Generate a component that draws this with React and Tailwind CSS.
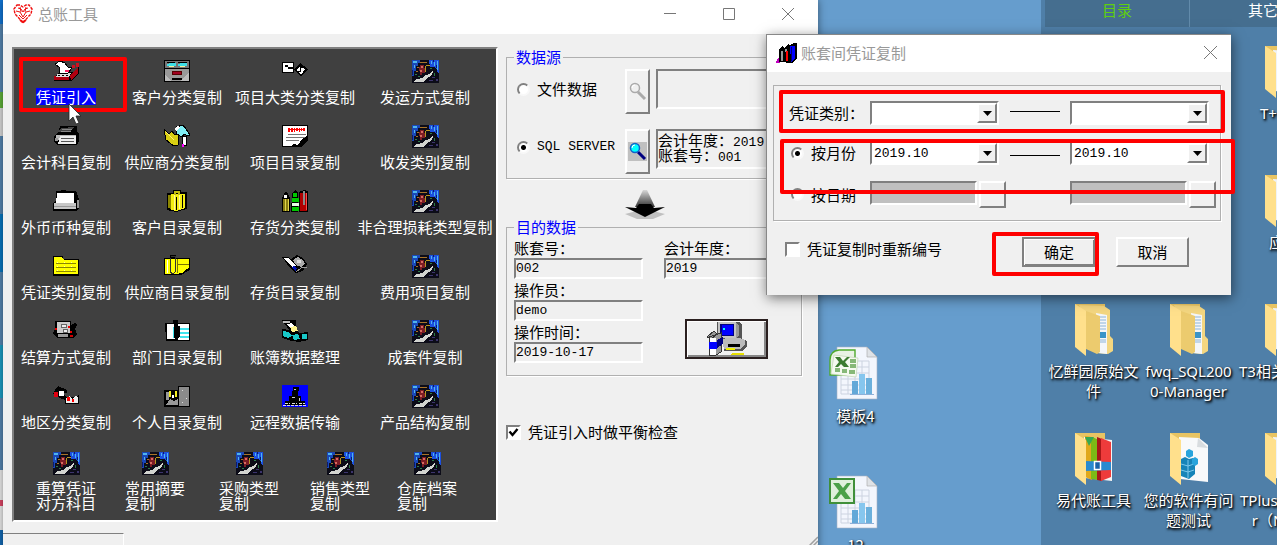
import { useState } from "react";

const cjk = "font-['Noto_Sans_CJK_SC',sans-serif]";
const mono = "font-['Liberation_Mono','Noto_Sans_CJK_SC',monospace] text-[13px]";
const sunken =
  "border-2 border-t-[#808080] border-l-[#808080] border-r-white border-b-white";
const raised =
  "border-2 border-t-white border-l-white border-r-[#808080] border-b-[#808080]";

// 26x22 toolbox icons
const icons = {
  register: (
    <>
      <path d="M1 17l5-5h18l2-8v9l-7 8H1z" fill="#000" />
      <path d="M1 16h15v4H1zM17 15l8-7v5l-7 7z" fill="#b00010" />
      <path d="M5 13h13l-2 4H3z" fill="#ddd" />
      <path d="M2 4l5-3 5 2 3 4 4 1-4 5H6l1-5z" fill="#fff" stroke="#000" />
      <path d="M19 5h3v3h-3zM23 3h3v4h-3z" fill="#d01020" />
      <path d="M12 10h4v2h-4z" fill="#ff2060" />
      <path d="M5 15h2M9 15h2M13 15h2" stroke="#000" />
    </>
  ),
  cabinet: (
    <>
      <path d="M0 0h26v22H0z" fill="#000" />
      <path d="M1 1h24v7H1z" fill="#777" />
      <path d="M3 4l4-1h5v3H3zM14 4l4-1h5v3h-9z" fill="#3fe0e8" />
      <path d="M5 6h5v1H5zM16 6h5v1h-5z" fill="#f4f09a" />
      <path d="M3 2h8M14 2h9" stroke="#000" />
      <path d="M1 9h24v12H1z" fill="#999" />
      <path d="M1 15l6 6H1zM25 12v9h-8z" fill="#bbb" />
      <path d="M8 11h10v4H8z" fill="#500" />
      <path d="M9 12h8v2H9z" fill="#a00020" />
      <path d="M8 18h10v2H8z" fill="#000" />
    </>
  ),
  notes: (
    <>
      <path d="M0 2h12v11H0z" fill="#000" />
      <path d="M1 3h10v9H1z" fill="#fff" />
      <path d="M3 5h3v2H3zM6 7h6v2H6z" fill="#000" />
      <path d="M12 10l6-7 8 6-7 8z" fill="#000" />
      <path d="M15 10l3-4 5 3-4 6z" fill="#fff" />
      <path d="M18 6v5h-2M19 7h3v2" fill="none" stroke="#000" />
    </>
  ),
  photo: (
    <>
      <path d="M0 0h27v23H0z" fill="#0c0c18" />
      <path d="M0 0h8v3H6v3H4v5H2v5H0z" fill="#1a48b8" />
      <path d="M17 0h10v14l-2-2V9l-3-2h-4z" fill="#1c50e0" />
      <path d="M1 1h4v2H1zM2 5h1v3H2zM19 1h1v3h-1zM22 2h1v4h-1zM25 1h1v9h-1z" fill="#4fb4ee" />
      <path d="M0 10h1v5H0zM21 0h1v2h-1zM24 5h1v3h-1z" fill="#0a1a70" />
      <path d="M8 2h7v1H8zM5 7h2v1H5zM4 11h2v1H4z" fill="#a8742a" />
      <path d="M8 5h4v3h1v5h-3v2H8v-4H7V7h1z" fill="#7c1c24" />
      <path d="M9 6h2v2H9zM8 10h2v2H8z" fill="#d86a60" />
      <path d="M13 6h1v6h-1zM14 5h4v1h-4z" fill="#b89422" />
      <path d="M3 14h2v1H3zM6 16h2v1H6zM18 8h2v1h-2zM22 13h1v3h-1z" fill="#2c7c4a" />
      <path d="M1 22l4-3 5-1 4-3 3-1 3-3 1 1-2 4-5 3-3 3z" fill="#d2d4d0" />
      <path d="M20 17h3v1h-3zM17 20h4v1h-4zM24 19h2v2h-2z" fill="#3c346c" />
    </>
  ),
  typewriter: (
    <>
      <path d="M7 1h17v5l2 3v7l-2 4H4l-3-3v-6l4-3z" fill="#000" />
      <path d="M8 3l13-1-4 5H4z" fill="#444" />
      <path d="M9 4h10M8 6h10" stroke="#888" />
      <path d="M3 10h20v5H3z" fill="#bbb" />
      <path d="M7 11h16v8H5z" fill="#eee" />
      <path d="M8 13h13M8 16h13" stroke="#555" />
      <path d="M2 13h3v3H2z" fill="#999" />
    </>
  ),
  supplier: (
    <>
      <path d="M0 4l5 5 3-3 3 4 3-2v12l-4 1-8-6z" fill="#d9cf13" stroke="#000" />
      <path d="M2 7l8 8" stroke="#fff07a" />
      <path d="M12 2l7-2 3 4 4 6-3 1-2-2-4 3-5-4z" fill="#7feef5" stroke="#000" />
      <path d="M10 4l3-3 3 1-3 4z" fill="#fff" />
      <path d="M18 11h4v9h-3z" fill="#fff" stroke="#000" />
      <path d="M18 19h2v3h-2z" fill="#f0f" />
    </>
  ),
  paper: (
    <>
      <path d="M0 0h26v16l-7 6H0z" fill="#000" />
      <path d="M1 1h24v10l-5 3-4 6-4-1-3 2H1z" fill="#fff" />
      <path d="M6 3h2v4H6zM9 3h2v4H9zM12 3h1v4h-1zM14 3h2v3h-2zM17 3h1v4h-1zM19 3h1v3h-1zM21 3h2v3h-2zM6 4h17v1H6z" fill="#f00" />
      <path d="M6 9h18M4 12h19M4 15h13" stroke="#777" />
    </>
  ),
  printer: (
    <>
      <path d="M3 1h5V0h5v1h10l3 8v9l-2 3H0v-8l3-2z" fill="#000" />
      <path d="M4 3h17v10H3z" fill="#fff" />
      <path d="M1 13h22v6H1z" fill="#c8c8c8" />
      <path d="M24 10h1v7h-1zM1 16h22" fill="#888" stroke="#999" />
    </>
  ),
  bag: (
    <>
      <path d="M3 3h6V0h8v2h6v17l-11 3-9-2z" fill="#000" />
      <path d="M7 4h14v14l-9 3-5-1z" fill="#f4ee12" />
      <path d="M4 5h3v14l-3-1z" fill="#8c8600" />
      <path d="M10 5v15M15 4v15" stroke="#fff89a" />
      <path d="M10 1h6v4h-2V3h-2v2h-2z" fill="#c4bc10" />
      <path d="M12 7v13M18 5v13" stroke="#000" />
    </>
  ),
  shelf: (
    <>
      <path d="M0 8l3-6h2l3 6v14H0zM10 4l3-4 3 3v19H9zM17 2l5-2 4 1v21h-9z" fill="#000" />
      <path d="M1 9h6v12H1z" fill="#8a7f12" />
      <path d="M2 5h3v3H2z" fill="#fff" />
      <path d="M3 9v12M6 9v12" stroke="#e1d64c" />
      <path d="M11 3h4v4h-4zM10 8h7v4h-7zM10 17h7v4h-7z" fill="#00c800" />
      <path d="M10 13h7v3h-7z" fill="#e8ffe8" />
      <path d="M18 3h7v18h-7z" fill="#b00000" />
      <path d="M21 1h2v14h-2z" fill="#888" />
      <path d="M24 3v17" stroke="#ff4848" />
    </>
  ),
  folder: (
    <>
      <path d="M0 1h10v3h16v17H0z" fill="#000" />
      <path d="M1 2h8l2 3h14v14H1z" fill="#ff0" />
      <path d="M3 8h20M3 12h20M3 16h20" stroke="#8a8500" />
      <path d="M4 7v11M11 7v11M18 7v11" stroke="#ffffa0" strokeDasharray="1 3" />
    </>
  ),
  folderClip: (
    <>
      <path d="M0 3h6V0h6v3h14v12l-9 5H0z" fill="#000" />
      <path d="M1 4h24v9l-4 2-2 3-8 1H1z" fill="#ff0" />
      <path d="M7 1h4v16l-2 2-3-2V3" fill="none" stroke="#333" />
      <path d="M13 4v14M14 9h11" stroke="#7a7500" />
      <path d="M3 5v13" stroke="#fff" />
    </>
  ),
  handset: (
    <>
      <path d="M0 2h6l3 2 6-4 6 3 4 6-4 7-7 2-6-5z" fill="#000" />
      <path d="M2 3h4l8 7-3 3z" fill="#fff" />
      <path d="M11 5l5-3 5 3 2 4-4 3-5-2z" fill="#aaa" />
      <path d="M15 5h4v3h-4z" fill="#ddd" />
      <path d="M9 12l5 4 1-3-3-2z" fill="#0010b0" />
      <path d="M14 17l5-4 6-1" fill="none" stroke="#999" />
    </>
  ),
  safe: (
    <>
      <path d="M2 1h16v4l4-2 2 2-2 4 2 5-4 4H4l-4-5 2-4z" fill="#000" />
      <path d="M4 2h13v11H4z" fill="#ccc" />
      <path d="M8 4h5v3H8zM10 9h4v3h-4z" fill="#eee" stroke="#666" />
      <path d="M2 8h2v2H2zM15 6h2v2h-2zM17 11h2v2h-2z" fill="#e00" />
      <path d="M5 14h10v3H5z" fill="#999" />
      <path d="M17 15h3v2h-3z" fill="#c00" />
    </>
  ),
  books: (
    <>
      <path d="M1 3h8V0h5v3h12v18H2z" fill="#000" />
      <path d="M3 4h8v15H3zM14 4h11v16H14z" fill="#fff" />
      <path d="M9 7h2v11H9zM16 8h9v2h-9zM16 12h9v2h-9zM16 16h9v2h-9z" fill="#40e4ee" />
      <path d="M11 2v15l2 1 2-2V6" fill="none" stroke="#000" strokeWidth="2" />
    </>
  ),
  lamp: (
    <>
      <path d="M0 0h14v10l3 3 9-1v8l-9 2-7-1-10-3v-9l7 1z" fill="#000" />
      <path d="M1 1h7v2H1z" fill="#bbb" />
      <path d="M5 4l5-1 2 3-4 2z" fill="#fff" />
      <path d="M8 7l6-1 2 5-6 1z" fill="#fff58c" />
      <path d="M1 11l6 1 3 4-4 2-5-2zM10 15l6-1 2 5-6 1zM20 14h5v5h-5z" fill="#18c8c8" />
    </>
  ),
  horn: (
    <>
      <path d="M5 1l9 4v3H9l5 4h9l3-2v9H12v-4L5 12l-5-3 2-4z" fill="#000" />
      <path d="M6 6h5v5H6z" fill="#fff" />
      <path d="M1 7h4v5H1z" fill="#e00010" />
      <path d="M13 13l4-2 2 3 4-3 2 2v5H13z" fill="#eee" />
      <path d="M14 12h3v4h-3zM19 14h2v3h-2z" fill="#f00" />
    </>
  ),
  person: (
    <>
      <path d="M0 5h14V1h12v21H0z" fill="#000" />
      <path d="M15 2h10v19H15z" fill="#8b8b8b" />
      <path d="M18 5h1v1h-1zM22 13h1v1h-1zM18 17h1v1h-1z" fill="#ddd" />
      <path d="M2 7h3v8H2zM6 14l4 2 4-2v6H2z" fill="#999" />
      <path d="M5 6h2v6H5zM11 6h2v6h-2z" fill="#f4ee20" />
      <path d="M8 10h2v3H8z" fill="#fff" />
    </>
  ),
  remote: (
    <>
      <path d="M0 0h26v22H0z" fill="#00f" />
      <path d="M11 2h6v4h-1v5h3v5h4v4H3v-4h4v-5h3z" fill="#000" />
      <path d="M12 4h2v1h-2zM10 12h3v1h-3zM17 13h1v3h-1z" fill="#ccc" />
      <path d="M1 20h24M3 18h5M10 18h5M17 18h6" stroke="#ddd" strokeDasharray="3 1" />
    </>
  ),
};

const tools = [
  ["凭证引入", "register"],
  ["客户分类复制", "cabinet"],
  ["项目大类分类复制", "notes"],
  ["发运方式复制", "photo"],
  ["会计科目复制", "typewriter"],
  ["供应商分类复制", "supplier"],
  ["项目目录复制", "paper"],
  ["收发类别复制", "photo"],
  ["外币币种复制", "printer"],
  ["客户目录复制", "bag"],
  ["存货分类复制", "shelf"],
  ["非合理损耗类型复制", "photo"],
  ["凭证类别复制", "folder"],
  ["供应商目录复制", "folderClip"],
  ["存货目录复制", "handset"],
  ["费用项目复制", "photo"],
  ["结算方式复制", "safe"],
  ["部门目录复制", "books"],
  ["账簿数据整理", "lamp"],
  ["成套件复制", "photo"],
  ["地区分类复制", "horn"],
  ["个人目录复制", "person"],
  ["远程数据传输", "remote"],
  ["产品结构复制", "photo"],
];

const bottomTools = [
  ["重算凭证", "对方科目"],
  ["常用摘要", "复制"],
  ["采购类型", "复制"],
  ["销售类型", "复制"],
  ["仓库档案", "复制"],
];

function ToolIcon({ name }) {
  return (
    <svg width="27" height="24" viewBox="0 0 27 24" shapeRendering="crispEdges" aria-hidden="true">
      {icons[name]}
    </svg>
  );
}

function Toolbox() {
  const [selected, setSelected] = useState("凭证引入");

  return (
    <div className="w-[486px] h-[475px] shrink-0 border-2 border-t-[#808080] border-l-[#808080] border-r-white border-b-white bg-[#404040] text-white">
      <div className="grid grid-cols-[104px_118px_118px_142px] pt-[11px]">
        {tools.map(([label, icon]) => (
          <button
            key={label}
            onClick={() => setSelected(label)}
            className="flex h-[65px] flex-col items-center gap-1 whitespace-nowrap"
          >
            <ToolIcon name={icon} />
            <span className={selected === label ? "bg-[#0000ff] leading-[17px]" : "leading-[17px]"}>
              {label}
            </span>
          </button>
        ))}
      </div>
      <div className="grid grid-cols-[89px_94px_91px_87px_60px] pt-0.5 pl-[22px]">
        {bottomTools.map(([first, second]) => (
          <button key={first} className="flex w-[60px] flex-col items-center gap-1 text-left">
            <ToolIcon name="photo" />
            <span className="w-full leading-[15px]">
              {first}
              <br />
              {second}
            </span>
          </button>
        ))}
      </div>
    </div>
  );
}

function Radio({ children, className = "", ...props }) {
  return (
    <label className={`flex items-center gap-[7px] whitespace-nowrap ${className}`}>
      <input
        type="radio"
        className="size-[13px] appearance-none rounded-full border-2 border-t-[#808080] border-l-[#808080] border-r-[#f8f8f8] border-b-[#f8f8f8] bg-white checked:bg-[radial-gradient(circle,#000_2px,#fff_3px)]"
        {...props}
      />
      {children}
    </label>
  );
}

function Checkbox({ children, defaultChecked }) {
  return (
    <label className="flex items-center gap-[7px] whitespace-nowrap">
      <span className="grid">
        <input
          type="checkbox"
          defaultChecked={defaultChecked}
          className={`peer col-start-1 row-start-1 size-[15px] appearance-none bg-white ${sunken}`}
        />
        <svg
          className="pointer-events-none invisible col-start-1 row-start-1 size-[15px] peer-checked:visible"
          viewBox="0 0 15 15"
          fill="none"
          stroke="#000"
          strokeWidth="2.4"
        >
          <path d="M3.5 6.5l3 3.5 5-6" />
        </svg>
      </span>
      {children}
    </label>
  );
}

function Combo({ label, value, className }) {
  return (
    <div className={`relative h-6 bg-white ${sunken} ${className}`}>
      <select
        aria-label={label}
        defaultValue={value}
        className={`block h-5 w-full appearance-none bg-transparent px-0.5 pt-0.5 leading-[18px] outline-none ${mono}`}
      >
        <option>{value}</option>
      </select>
      <span className={`pointer-events-none absolute inset-y-0 right-0 flex w-5 items-center justify-center bg-[#f0f0f0] ${raised}`}>
        <svg width="9" height="5" viewBox="0 0 9 5">
          <path d="M0 0h9L4.5 5z" />
        </svg>
      </span>
    </div>
  );
}

function Field({ id, label, value }) {
  return (
    <div className="w-[129px]">
      <label htmlFor={id} className="block h-[21px] leading-[21px]">
        {label}
      </label>
      <input
        id={id}
        readOnly
        value={value}
        className={`block h-[21px] w-full bg-transparent outline-none ${sunken} ${mono}`}
      />
    </div>
  );
}

function Magnifier({ lens, rim, handle }) {
  return (
    <svg width="19" height="19" viewBox="0 0 19 19" fill="none">
      <path d="M10 10l7 7" stroke={handle} strokeWidth="3" />
      <circle cx="7" cy="6" r="4.5" fill={lens} stroke={rim} strokeWidth="1.5" />
      <path d="M4 6a3 3 0 013-3" stroke="#fff" />
    </svg>
  );
}

function DataSource() {
  return (
    <fieldset className="h-[131px] border border-[#b0b0b0] shadow-[1px_1px_0_#fff]">
      <legend className="ml-[7px] px-0.5 leading-[18px] text-[#0000ff]">数据源</legend>
      <div className="flex flex-col gap-[15px] pt-[3px] pl-2.5">
        <div className="flex h-[45px]">
          <Radio name="source" className="h-10 w-[108px]">
            文件数据
          </Radio>
          <button aria-label="浏览文件" className={`mr-1.5 flex w-[25px] items-center justify-center bg-[#f0f0f0] ${raised}`}>
            <Magnifier lens="#f0f0f0" rim="#aaaaaa" handle="#aaaaaa" />
          </button>
          <div className={`h-10 w-[138px] ${sunken}`} />
        </div>
        <div className="flex h-[45px]">
          <Radio name="source" defaultChecked className="h-9 w-[108px]">
            <span className={mono}>SQL SERVER</span>
          </Radio>
          <button aria-label="浏览账套" className={`mr-1.5 flex w-[25px] items-center justify-center bg-[#f0f0f0] ${raised}`}>
            <span className="bg-[#c0c0c0]">
              <Magnifier lens="#00ffff" rim="#1460c8" handle="#000080" />
            </span>
          </button>
          <div className={`h-10 w-[138px] pt-px leading-[15px] whitespace-nowrap ${sunken}`}>
            <p className="h-[15px]">
              会计年度：<span className={mono}>2019</span>
            </p>
            <p className="h-[15px]">
              账套号：<span className={mono}>001</span>
            </p>
          </div>
        </div>
      </div>
    </fieldset>
  );
}

function TargetData() {
  return (
    <fieldset className="border border-[#b0b0b0] pb-3 shadow-[1px_1px_0_#fff]">
      <legend className="ml-[7px] px-0.5 leading-[18px] text-[#0000ff]">目的数据</legend>
      <div className="flex gap-[21px] pt-px pl-[7px]">
        <div>
          <Field id="account" label="账套号：" value="002" />
          <Field id="operator" label="操作员：" value="demo" />
          <Field id="time" label="操作时间：" value="2019-10-17" />
        </div>
        <div>
          <Field id="year" label="会计年度：" value="2019" />
          <button
            aria-label="执行"
            className="mt-10 ml-[21px] flex h-10 w-[83px] items-center justify-center border-2 border-[#2b2020] bg-[#f0f0f0] shadow-[inset_1px_1px_0_#fff,inset_-2px_-2px_0_#888]"
          >
            <svg width="42" height="34" viewBox="0 0 42 34" shapeRendering="crispEdges">
              <path d="M11 0h22l3 3v14l5 2v5l-5 5H18V17h-7z" fill="#555" />
              <path d="M12 0h18v16H12z" fill="#c4c4c4" />
              <path d="M30 1l3 2v11l-3 2z" fill="#999" />
              <path d="M14 2h14v12H14z" fill="#000080" />
              <path d="M16 3h11v10H16z" fill="#00f" />
              <path d="M17 6h2v2h-2z" fill="#0ff" />
              <path d="M16 18l4-2h13l6 2v4l-5 5H18z" fill="#bbb" />
              <path d="M22 22h12v3H22z" fill="#000" />
              <path d="M20 26h9v2h-9z" fill="#ee0" />
              <path d="M1 15l7-6 3 3-6 5zM3 15l12-4v19l-5 3H3z" fill="#999" stroke="#333" />
              <path d="M4 16h6v17H4z" fill="#fff" />
              <path d="M3 20h8v7H3z" fill="#00f" />
              <path d="M11 18l6-3v7l-6 4z" fill="#000080" />
              <path d="M26 31h12v2H24z" fill="#e8e000" />
            </svg>
          </button>
        </div>
      </div>
    </fieldset>
  );
}

function DownArrow() {
  return (
    <svg width="40" height="30" viewBox="0 0 40 30" className="mt-[11px] ml-[119px]">
      <defs>
        <linearGradient id="fade" x1="0" y1="0" x2="0" y2="1">
          <stop offset="0" stopColor="#d8d8d8" />
          <stop offset="1" stopColor="#333" />
        </linearGradient>
      </defs>
      <path d="M0 24l20-5 20 5-12 5H12z" fill="#c0c0c0" />
      <path d="M18 0h4l8 17H10z" fill="url(#fade)" />
      <path d="M0 17l11 1 3-4h12l3 4 11-1-20 10z" fill="#000" />
    </svg>
  );
}

function MainWindow() {
  return (
    <section className="absolute top-0 left-[3px] w-[815px] bg-[#f0f0f0] shadow-[0_0_8px_#0007]">
      <header className="flex h-[34px] items-center bg-white pb-1.5">
        <svg width="20" height="20" viewBox="0 0 20 20" fill="none" stroke="#f01010" className="ml-2.5">
          <path d="M4 1h3l3 2 3-2h3l3 4-1 5-3 3-5 6-5-6-3-3-1-5z" strokeDasharray="3 1" strokeWidth="1.4" />
          <path d="M5 4l3 1 2 3 2-3 3-1M3 7l4 1 3 5 3-5 4-1M6 11l4 4 4-4M7 3l1 5M13 3l-1 5" />
          <path d="M7 16l3 2 3-2" strokeWidth="2" />
        </svg>
        <h1 className="ml-[5px] flex-1 text-[#999]">总账工具</h1>
        <div className="flex items-center gap-[47px] pr-6">
          <button aria-label="最小化">
            <svg width="12" height="12" stroke="#777"><path d="M0 5.5h12" /></svg>
          </button>
          <button aria-label="最大化">
            <svg width="12" height="12" fill="none" stroke="#777"><path d="M.5.5h11v11H.5z" /></svg>
          </button>
          <button aria-label="关闭">
            <svg width="12" height="12" stroke="#777"><path d="M0 0l12 12M12 0L0 12" /></svg>
          </button>
        </div>
      </header>
      <div className="flex gap-2 pt-[13px] pr-4 pl-[9px]">
        <Toolbox />
        <div className="flex-1 pt-px">
          <DataSource />
          <DownArrow />
          <div className="-mt-0.5">
            <TargetData />
          </div>
          <div className="mt-[46px]">
            <Checkbox defaultChecked>凭证引入时做平衡检查</Checkbox>
          </div>
        </div>
      </div>
      <footer className="mt-[11px] flex items-start justify-between">
        <div className="h-5 w-[121px] border-t border-r border-t-[#808080] border-r-white" />
        <svg width="12" height="20" stroke="#a0a0a0" strokeWidth="1.5">
          <path d="M1 15L12 4M5 15l7-7M9 15l3-3" />
        </svg>
      </footer>
    </section>
  );
}

function CopyDialog() {
  return (
    <section
      role="dialog"
      aria-label="账套间凭证复制"
      className="absolute top-[34px] left-[766px] w-[465px] border-t border-l border-[#888] bg-[#f0f0f0] shadow-[1px_3px_12px_#0008]"
    >
      <header className="flex h-[37px] items-center bg-white pr-3.5 pb-0.5 pl-[9px]">
        <svg width="21" height="20" viewBox="0 0 21 20" shapeRendering="crispEdges">
          <path d="M0 19l4-7v8H0z" fill="#c000c0" />
          <path d="M3 19V7l3-4 3 2 3-4 2 1 4-2h3v16l-5 4z" fill="#000" />
          <path d="M5 8h2v10H5zM9 6h2v3H9z" fill="#999" />
          <path d="M10 8h2v10h-2z" fill="#f00" />
          <path d="M14 3h5v13l-4 3z" fill="#00f" />
          <path d="M15 4v14" stroke="#000070" />
        </svg>
        <h2 className="ml-1 flex-1 text-[#999]">账套间凭证复制</h2>
        <button aria-label="关闭">
          <svg width="13" height="13" stroke="#777"><path d="M0 0l13 13M13 0L0 13" /></svg>
        </button>
      </header>
      <div className="mt-[13px] mr-2.5 ml-1.5 grid grid-cols-[81px_140px_60px_146px] gap-y-4 border border-[#b0b0b0] pt-[15px] pb-3 pl-[15px] shadow-[1px_1px_0_#fff]">
        <span className="leading-6 whitespace-nowrap">凭证类别：</span>
        <Combo label="起始类别" value="" className="w-[129px]" />
        <hr className="mt-2.5 w-[50px] border-[#000]" />
        <Combo label="结束类别" value="" className="w-[139px]" />

        <Radio name="range" defaultChecked className="pl-0.5">
          按月份
        </Radio>
        <Combo label="起始月份" value="2019.10" className="w-[129px]" />
        <hr className="mt-3.5 w-[50px] border-[#000]" />
        <Combo label="结束月份" value="2019.10" className="w-[139px]" />

        <Radio name="range" className="pl-0.5">
          按日期
        </Radio>
        <div className="flex gap-0.5">
          <input aria-label="起始日期" disabled className={`h-6 w-[107px] bg-[#c0c0c0] ${sunken}`} />
          <button aria-label="选择起始日期" className={`h-[27px] w-[27px] bg-[#f0f0f0] ${raised}`} />
        </div>
        <span />
        <div className="flex gap-0.5">
          <input aria-label="结束日期" disabled className={`h-6 w-[117px] bg-[#c0c0c0] ${sunken}`} />
          <button aria-label="选择结束日期" className={`h-[27px] w-[27px] bg-[#f0f0f0] ${raised}`} />
        </div>
      </div>
      <div className="mt-4 flex items-start pr-[42px] pb-7 pl-[18px]">
        <div className="flex h-6 items-center">
          <Checkbox>凭证复制时重新编号</Checkbox>
        </div>
        <button className="mr-5 ml-auto h-[30px] w-[74px] border-2 border-[#808080] bg-[#f0f0f0] shadow-[inset_1px_1px_0_#fff,inset_-1px_-1px_0_#808080]">
          确定
        </button>
        <button className={`h-[30px] w-[73px] bg-[#f0f0f0] ${raised}`}>取消</button>
      </div>
    </section>
  );
}

function FolderIcon({ kind }) {
  return (
    <svg width="40" height="52" viewBox="0 0 40 52">
      <path d="M1 0h30v40H1z" fill="#e8c463" />
      {kind === "docs" && (
        <>
          <path d="M5 1l25 1 6 4v26l3 3v12l-5 3-12-1z" fill="#f3d680" />
          <path d="M22 9l11 2v39l-9-1z" fill="#f4f6f8" />
          <path d="M26 13h6M26 16h6M26 19h6M26 22h6M26 25h6M26 36h6M26 38h6" stroke="#8cb4d8" />
          <path d="M25 28h7v6h-7z" fill="#3a94c8" />
          <path d="M12 7l14 5v36l-3 2-11-5z" fill="#eccb6e" />
        </>
      )}
      {kind === "zip" && (
        <>
          <path d="M10 4l28 3v41l-27-3z" fill="#f4f4f4" />
          <path d="M11 3l7 1v43l-7-3z" fill="#e0a81c" />
          <path d="M17 4l7 2v41l-7-1z" fill="#7cb916" />
          <path d="M11 4h9l-5 9z" fill="#34a853" />
          <path d="M23 4l5 2v42l-5-1z" fill="#a81818" />
          <path d="M27 5l10 4v35l-10 4z" fill="#ee3b3b" />
          <path d="M11 28l26 1v8l-26 1z" fill="#2a8ad0" />
          <rect x="20.5" y="28.500" width="6" height="8" fill="#1b62a8" stroke="#fff" strokeWidth="1.500" />
        </>
      )}
      {kind === "registry" && (
        <>
          <path d="M10 4l20 1 9 7v37l-28-3z" fill="#f8f9fa" />
          <path d="M29 5l-1 9 11 1z" fill="#d8dcdf" />
          <path d="M12 26l4-2 4 2 4-1 2 2v14l-6 5-8-3z" fill="#1684b8" />
          <path d="M12 31l7 2 6-2M12 37l7 2 6-2M19 27v18" fill="none" stroke="#7cc8ec" />
          <path d="M17 18l3-2 4 2v5l-4 2-3-2zM23 26l3-2 3 2v5l-3 2-3-2z" fill="#28a4dc" />
        </>
      )}
      {kind === "plain" && <path d="M9 4l30 1v43l-28-3z" fill="#f0f3f6" />}
      <path d="M1 0l11 7v45L1 43z" fill="#ffe08c" />
    </svg>
  );
}

function ExcelIcon({ old }) {
  return (
    <svg width="54" height="54" viewBox="0 0 54 54">
      <path d="M8 1h30l10 10v42H8z" fill="#f3f6fd" stroke="#a8b4c4" strokeWidth=".6" />
      <path d="M38 1v10h10z" fill="#dfe2e6" stroke="#a4a4a4" strokeWidth=".6" />
      <path d="M12 15h28v33H12zM12 21h28M12 27h28M12 33h28M12 39h28M12 44h28M19 15v33M26 15v33M33 15v33" fill="none" stroke="#ccd3e0" />
      <path d="M23 35h6v13h-6z" fill="#63a8d8" />
      <path d="M30 28h6v20h-6z" fill="#86c6ee" />
      <path d="M37 32h6v16h-6z" fill="#6bb0dc" />
      <path d="M21 48.500h24" stroke="#8eb0d8" />
      {old ? (
        <>
          <path d="M1 29V14q0-9 9-10h16v25z" fill="#e8f2e4" stroke="#4eaa2c" strokeWidth="1.4" />
          <path d="M5 9l24 3-2 19-25-3z" fill="#f5faf0" stroke="#c0d4b4" strokeWidth=".7" />
          <path d="M6 11h5l3 4 4-4h3l-5 5 4 5h-5l-3-3-3 3H6l4-5z" fill="#3c7c30" />
          <path d="M21 13h6v4h-6zM21 18h6v4h-6zM20 24h6v4h-6zM13 23h5v4h-5zM6 22h5v4H6z" fill="#86b878" />
        </>
      ) : (
        <>
          <path d="M1 4h24v24H1z" fill="#dff0dc" stroke="#3f8f3a" strokeWidth="2" />
          <path d="M4 8h6l4 5 4-5h4l-6 8 6 8h-6l-4-5-4 5H4l6-8z" fill="#4aa048" />
        </>
      )}
    </svg>
  );
}

const labelShadow = "text-white [text-shadow:1px_1px_2px_#000,1px_2px_3px_#000]";

function FolderPanel() {
  // the first rows of the first two columns are empty slots behind the dialog
  const folders = [
    null,
    null,
    ["plain", "T+", "pl-6"],
    null,
    null,
    ["plain", "应用", "pl-[33px]"],
    ["docs", "忆鲜园原始文件", "px-0.5 text-center break-all"],
    ["docs", "fwq_SQL2000-Manager", "px-0.5 text-center break-all"],
    ["plain", "T3相关", "pl-[3px]"],
    ["zip", "易代账工具", "px-0.5 text-center break-all"],
    ["registry", "您的软件有问题测试", "px-0.5 text-center break-all"],
    ["plain", "TPlus\n   r（N", "pl-1 whitespace-pre"],
  ];

  return (
    <section className="absolute inset-y-0 left-[1041px] right-0 overflow-hidden bg-[#4f7fa8]">
      <div className="ml-1 flex h-[27px] bg-[#456e8f]">
        <button className="w-[145px] shrink-0 border-r border-[#628bab] pb-2 text-[#5fcf10]">目录</button>
        <button className="w-[146px] shrink-0 pb-2 text-white">其它</button>
      </div>
      <div className="ml-[5px] grid grid-cols-[95px_95px_95px] pt-[19px]">
        {folders.map((item, i) =>
          item ? (
            <a key={i} href="#folder" className="flex h-[129px] flex-col items-center gap-[5px]">
              <FolderIcon kind={item[0]} />
              <span className={`w-full font-['Noto_Sans','Noto_Sans_CJK_SC',sans-serif] leading-5 ${labelShadow} ${item[2]}`}>
                {item[1]}
              </span>
            </a>
          ) : (
            <span key={i} className="h-[129px]" />
          )
        )}
      </div>
    </section>
  );
}

export default function App() {
  return (
    <main className={`relative h-screen overflow-hidden bg-[#669dcd] text-[15px] leading-5 text-black ${cjk}`}>
      <div className="absolute inset-y-0 left-0 w-[3px] bg-[linear-gradient(#1277d8_0_24px,#5888b4_24px_92px,#62b53c_92px_108px,#ddd_108px_136px,#5888b4_136px_214px,#0879c4_214px_272px,#5888b4_272px_345px,#1ca0c8_345px_398px,#5888b4_398px_470px,#eee_470px_500px,#e04868_500px_506px,#eee_506px_530px,#146cb8_530px)]" />
      <FolderPanel />
      <div className="absolute top-[346px] left-[808px] flex w-[95px] flex-col gap-[55px]">
        <a href="#sheet" className="flex flex-col items-center">
          <ExcelIcon old />
          <span className={`mt-1.5 h-[14px] leading-5 ${labelShadow}`}>模板4</span>
        </a>
        <a href="#sheet2" className="flex flex-col items-center">
          <ExcelIcon />
          <span className={`mt-1.5 ${labelShadow}`}>12</span>
        </a>
      </div>
      <MainWindow />
      <CopyDialog />

      {/* step marks */}
      <div className="pointer-events-none absolute top-[57px] left-[19px] h-[55px] w-[108px] rounded-xs border-4 border-[#ff0000]" />
      <div className="pointer-events-none absolute top-[90px] left-[779px] h-[43px] w-[446px] rounded-xs border-4 border-[#ff0000]" />
      <div className="pointer-events-none absolute top-[139px] left-[780px] h-[55px] w-[455px] rounded-xs border-4 border-[#ff0000]" />
      <div className="pointer-events-none absolute top-[232px] left-[992px] h-[44px] w-[107px] rounded-xs border-4 border-[#ff0000]" />
      <svg width="14" height="22" viewBox="0 0 14 22" className="absolute top-[103px] left-[68px]">
        <path d="M1 1v17l4-4 3 7 3-1-3-7h5z" fill="#fff" stroke="#222" strokeWidth=".8" />
      </svg>
    </main>
  );
}
